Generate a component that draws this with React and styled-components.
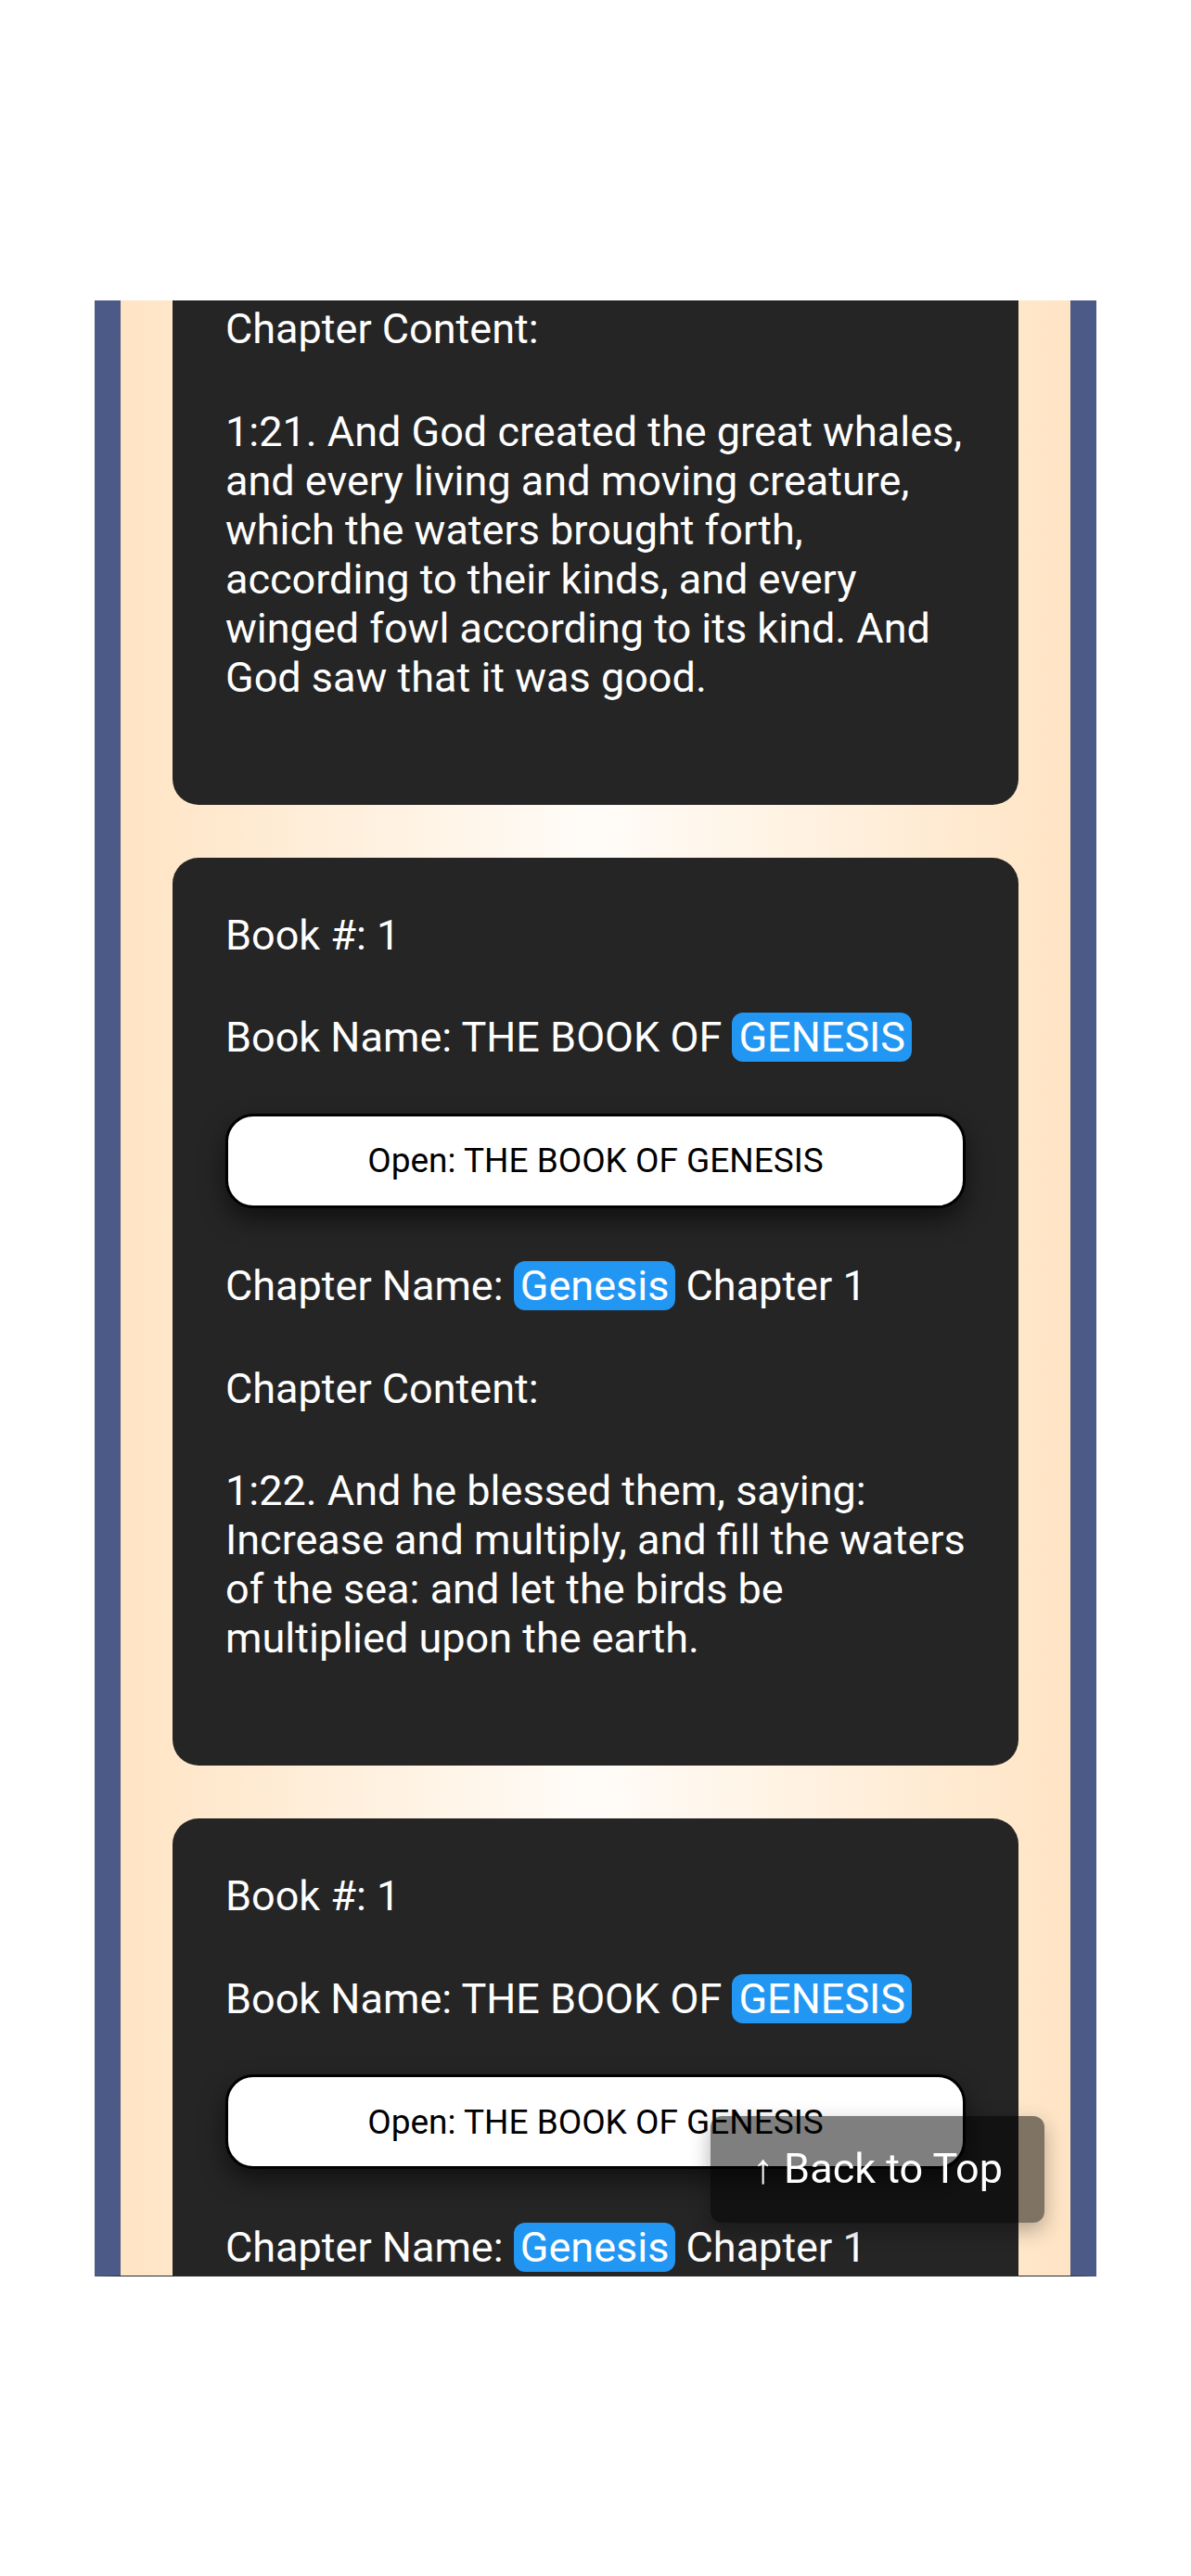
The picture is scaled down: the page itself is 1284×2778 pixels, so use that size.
import React from "react";
import styled, { createGlobalStyle } from "styled-components";

const GlobalStyle = createGlobalStyle`
  html, body {
    margin: 0;
    padding: 0;
    background: #ffffff;
  }
  body {
    font-family: Roboto, "Noto Sans", "Liberation Sans", sans-serif;
  }
  * { box-sizing: border-box; }
`;

const Page = styled.div`
  padding-top: 324px;
  min-height: 2778px;
  background: #ffffff;
`;

const Frame = styled.section`
  width: 1080px;
  height: 2131px;
  margin: 0 auto;
  overflow: hidden;
  border-left: 28px solid #4b5a86;
  border-right: 28px solid #4b5a86;
  border-bottom: 1px solid #2a2a2a;
  padding: 0 56px;
  background: linear-gradient(90deg, #ffe4c4 0%, #fffcf8 50%, #ffe4c4 100%);
`;

const List = styled.div`
  display: flex;
  flex-direction: column;
  gap: 57px;
`;

const Card = styled.article`
  background: #252525;
  color: #ffffff;
  border-radius: ${(p) => (p.$cut ? "0 0 28px 28px" : "28px")};
  padding: ${(p) => (p.$cut ? "4px" : "57px")} 57px 57px;
  display: flex;
  flex-direction: column;
  gap: 57.5px;
  font-size: 45px;
  line-height: 53px;
`;

const Line = styled.div`
  margin: 0;
`;

const Verse = styled.p`
  margin: 0 0 54px 0;
`;

const Chip = styled.span`
  background: #2196f3;
  color: #ffffff;
  border-radius: 12px;
  padding: 0 7px;
`;

const OpenButton = styled.button`
  height: 102px;
  width: 100%;
  margin-top: -2px;
  background: #ffffff;
  color: #000000;
  border: 3px solid #000000;
  border-radius: 30px;
  font-family: Roboto, "Noto Sans", "Liberation Sans", sans-serif;
  font-size: 37px;
  box-shadow: 0 12px 26px rgba(0, 0, 0, 0.55);
  cursor: pointer;
`;

const BackToTop = styled.button`
  position: fixed;
  right: 158px;
  bottom: 381px;
  padding: 31px 45px;
  border: none;
  border-radius: 12px;
  background: rgba(0, 0, 0, 0.5);
  color: #ffffff;
  font-family: Roboto, "Noto Sans", "Liberation Sans", sans-serif;
  font-size: 45px;
  line-height: 52.7px;
  box-shadow: 0 8px 22px rgba(0, 0, 0, 0.3);
  cursor: pointer;
`;

const entries = [
  {
    cut: true,
    verse:
      "1:21. And God created the great whales, and every living and moving creature, which the waters brought forth, according to their kinds, and every winged fowl according to its kind. And God saw that it was good.",
  },
  {
    verse:
      "1:22. And he blessed them, saying: Increase and multiply, and fill the waters of the sea: and let the birds be multiplied upon the earth.",
  },
  {
    verse: "1:23. And the evening and morning were the fifth day.",
  },
];

function Entry({ cut, verse }) {
  return (
    <Card $cut={cut}>
      {!cut && (
        <>
          <Line>Book #: 1</Line>
          <Line>
            Book Name: THE BOOK OF <Chip>GENESIS</Chip>
          </Line>
          <OpenButton type="button">Open: THE BOOK OF GENESIS</OpenButton>
          <Line>
            Chapter Name: <Chip>Genesis</Chip> Chapter 1
          </Line>
        </>
      )}
      <Line>Chapter Content:</Line>
      <Verse>{verse}</Verse>
    </Card>
  );
}

export default function App() {
  return (
    <>
      <GlobalStyle />
      <Page>
        <Frame>
          <List>
            {entries.map((e, i) => (
              <Entry key={i} cut={e.cut} verse={e.verse} />
            ))}
          </List>
        </Frame>
        <BackToTop type="button">↑ Back to Top</BackToTop>
      </Page>
    </>
  );
}
